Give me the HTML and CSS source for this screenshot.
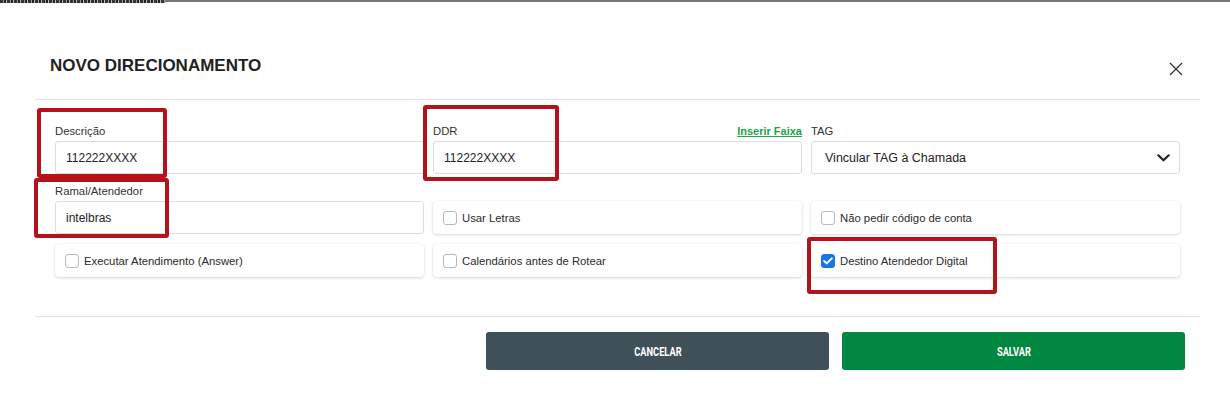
FILE: index.html
```html
<!DOCTYPE html>
<html lang="pt-BR">
<head>
<meta charset="utf-8">
<title>Novo Direcionamento</title>
<link rel="stylesheet" href="styles.css">
</head>
<body>
<div class="topbar"><div class="topbar-dark"></div><div class="topbar-gray"></div></div>
<div class="modal">
  <div class="modal-header">
    <h1 class="modal-title">NOVO DIRECIONAMENTO</h1>
    <button class="close-btn" aria-label="Fechar">
      <svg width="14" height="14" viewBox="0 0 14 14"><path d="M1 1 L13 13 M13 1 L1 13" stroke="#333" stroke-width="1.3" fill="none"/></svg>
    </button>
  </div>
  <div class="modal-body">
    <div class="field">
      <div class="label-row"><span class="label">Descrição</span></div>
      <div class="input">112222XXXX</div>
    </div>
    <div class="field">
      <div class="label-row"><span class="label">DDR</span><a class="link">Inserir Faixa</a></div>
      <div class="input">112222XXXX</div>
    </div>
    <div class="field">
      <div class="label-row"><span class="label">TAG</span></div>
      <div class="input select">
        <span>Vincular TAG à Chamada</span>
        <svg width="13" height="8" viewBox="0 0 13 8"><path d="M1.3 1.3 L6.5 6.3 L11.7 1.3" stroke="#222" stroke-width="2.2" fill="none" stroke-linecap="round" stroke-linejoin="round"/></svg>
      </div>
    </div>

    <div class="field">
      <div class="label-row"><span class="label">Ramal/Atendedor</span></div>
      <div class="input">intelbras</div>
    </div>
    <div class="card end"><span class="box"></span><span class="card-text">Usar Letras</span></div>
    <div class="card end"><span class="box"></span><span class="card-text">Não pedir código de conta</span></div>

    <div class="card"><span class="box"></span><span class="card-text">Executar Atendimento (Answer)</span></div>
    <div class="card"><span class="box"></span><span class="card-text">Calendários antes de Rotear</span></div>
    <div class="card"><span class="box checked"><svg width="10" height="8" viewBox="0 0 10 8"><path d="M1.2 4 L3.8 6.4 L8.8 1.4" stroke="#fff" stroke-width="2" fill="none" stroke-linecap="round" stroke-linejoin="round"/></svg></span><span class="card-text">Destino Atendedor Digital</span></div>
  </div>
  <div class="modal-footer">
    <button class="btn btn-cancel"><span class="btn-text">CANCELAR</span></button>
    <button class="btn btn-save"><span class="btn-text">SALVAR</span></button>
  </div>
</div>

<div class="mark mark-desc"></div>
<div class="mark mark-ramal"></div>
<div class="mark mark-ddr"></div>
<div class="mark mark-dest"></div>
</body>
</html>
```

FILE: styles.css
```css
html, body {
  margin: 0;
  padding: 0;
  background: #fff;
}
body {
  position: relative;
  width: 1230px;
  height: 420px;
  overflow: hidden;
  font-family: "Liberation Sans", Arial, sans-serif;
  color: #333;
}
.topbar {
  display: flex;
  height: 3px;
}
.topbar-dark {
  width: 165px;
  height: 3px;
  background: repeating-linear-gradient(90deg, #333 0 3px, #999 3px 4px, #222 4px 6px, #bbb 6px 7px);
}
.topbar-gray {
  flex: 1;
  height: 2px;
  background: #777;
}
.modal {
  margin: 0 30px 0 35px;
}
.modal-header {
  display: flex;
  justify-content: space-between;
  align-items: flex-start;
  padding: 51px 17px 21px 15px;
  border-bottom: 1px solid #e3e3e3;
}
.modal-title {
  margin: 0;
  font-size: 17px;
  line-height: 24px;
  font-weight: bold;
  color: #222;
}
.close-btn {
  margin-top: 8px;
  padding: 0;
  border: 0;
  background: none;
  width: 14px;
  height: 14px;
  display: block;
}
.close-btn svg { display: block; }
.modal-body {
  display: grid;
  grid-template-columns: repeat(3, 369px);
  column-gap: 9px;
  row-gap: 10px;
  padding: 24px 20px 39px 20px;
  border-bottom: 1px solid #e3e3e3;
}
.field {
  display: flex;
  flex-direction: column;
}
.label-row {
  display: flex;
  justify-content: space-between;
  align-items: flex-end;
  height: 15px;
  margin-bottom: 2px;
}
.label {
  font-size: 11.3px;
  line-height: 15px;
  color: #333;
}
.link {
  font-size: 11px;
  line-height: 15px;
  font-weight: bold;
  color: #22a447;
  text-decoration: underline;
}
.input {
  box-sizing: border-box;
  height: 33px;
  border: 1px solid #dedede;
  border-radius: 3px;
  padding: 0 10px;
  display: flex;
  align-items: center;
  font-size: 12px;
  color: #222;
  background: #fff;
}
.select {
  justify-content: space-between;
  padding: 0 9px 0 13px;
  font-size: 12.5px;
}
.select svg { display: block; }
.card {
  box-sizing: border-box;
  height: 33px;
  border-radius: 4px;
  background: #fff;
  box-shadow: 0 1px 3px rgba(0, 0, 0, 0.16), 0 0 1px rgba(0, 0, 0, 0.08);
  display: flex;
  align-items: center;
  padding-left: 10px;
  gap: 5px;
}
.card.end { align-self: end; }
.box {
  box-sizing: border-box;
  width: 14px;
  height: 14px;
  border: 1px solid #b8b8b8;
  border-radius: 3px;
  background: #fff;
  display: flex;
  align-items: center;
  justify-content: center;
}
.box.checked {
  background: #1a73e8;
  border-color: #1a73e8;
}
.box svg { display: block; }
.card-text {
  font-size: 11.3px;
  color: #2b2b2b;
}
.modal-footer {
  display: flex;
  justify-content: flex-end;
  gap: 13px;
  padding: 15px 15px 0 0;
}
.btn {
  width: 343px;
  height: 38px;
  border: 0;
  border-radius: 3px;
  color: #fff;
  font-family: Roboto, "Liberation Sans", sans-serif;
  font-weight: 700;
  font-size: 12.5px;
}
.btn-text {
  display: inline-block;
  transform: scaleX(0.74);
}
.btn-cancel { background: #3f5058; }
.btn-save { background: #008840; }

.mark {
  position: absolute;
  box-sizing: border-box;
  border: 4px solid #b5121b;
  border-radius: 3px;
}
.mark-desc { left: 37px; top: 108px; width: 130px; height: 70px; }
.mark-ramal { left: 34px; top: 178px; width: 135px; height: 60px; }
.mark-ddr { left: 423px; top: 105px; width: 136px; height: 76px; }
.mark-dest { left: 807px; top: 237px; width: 190px; height: 57px; }
```
